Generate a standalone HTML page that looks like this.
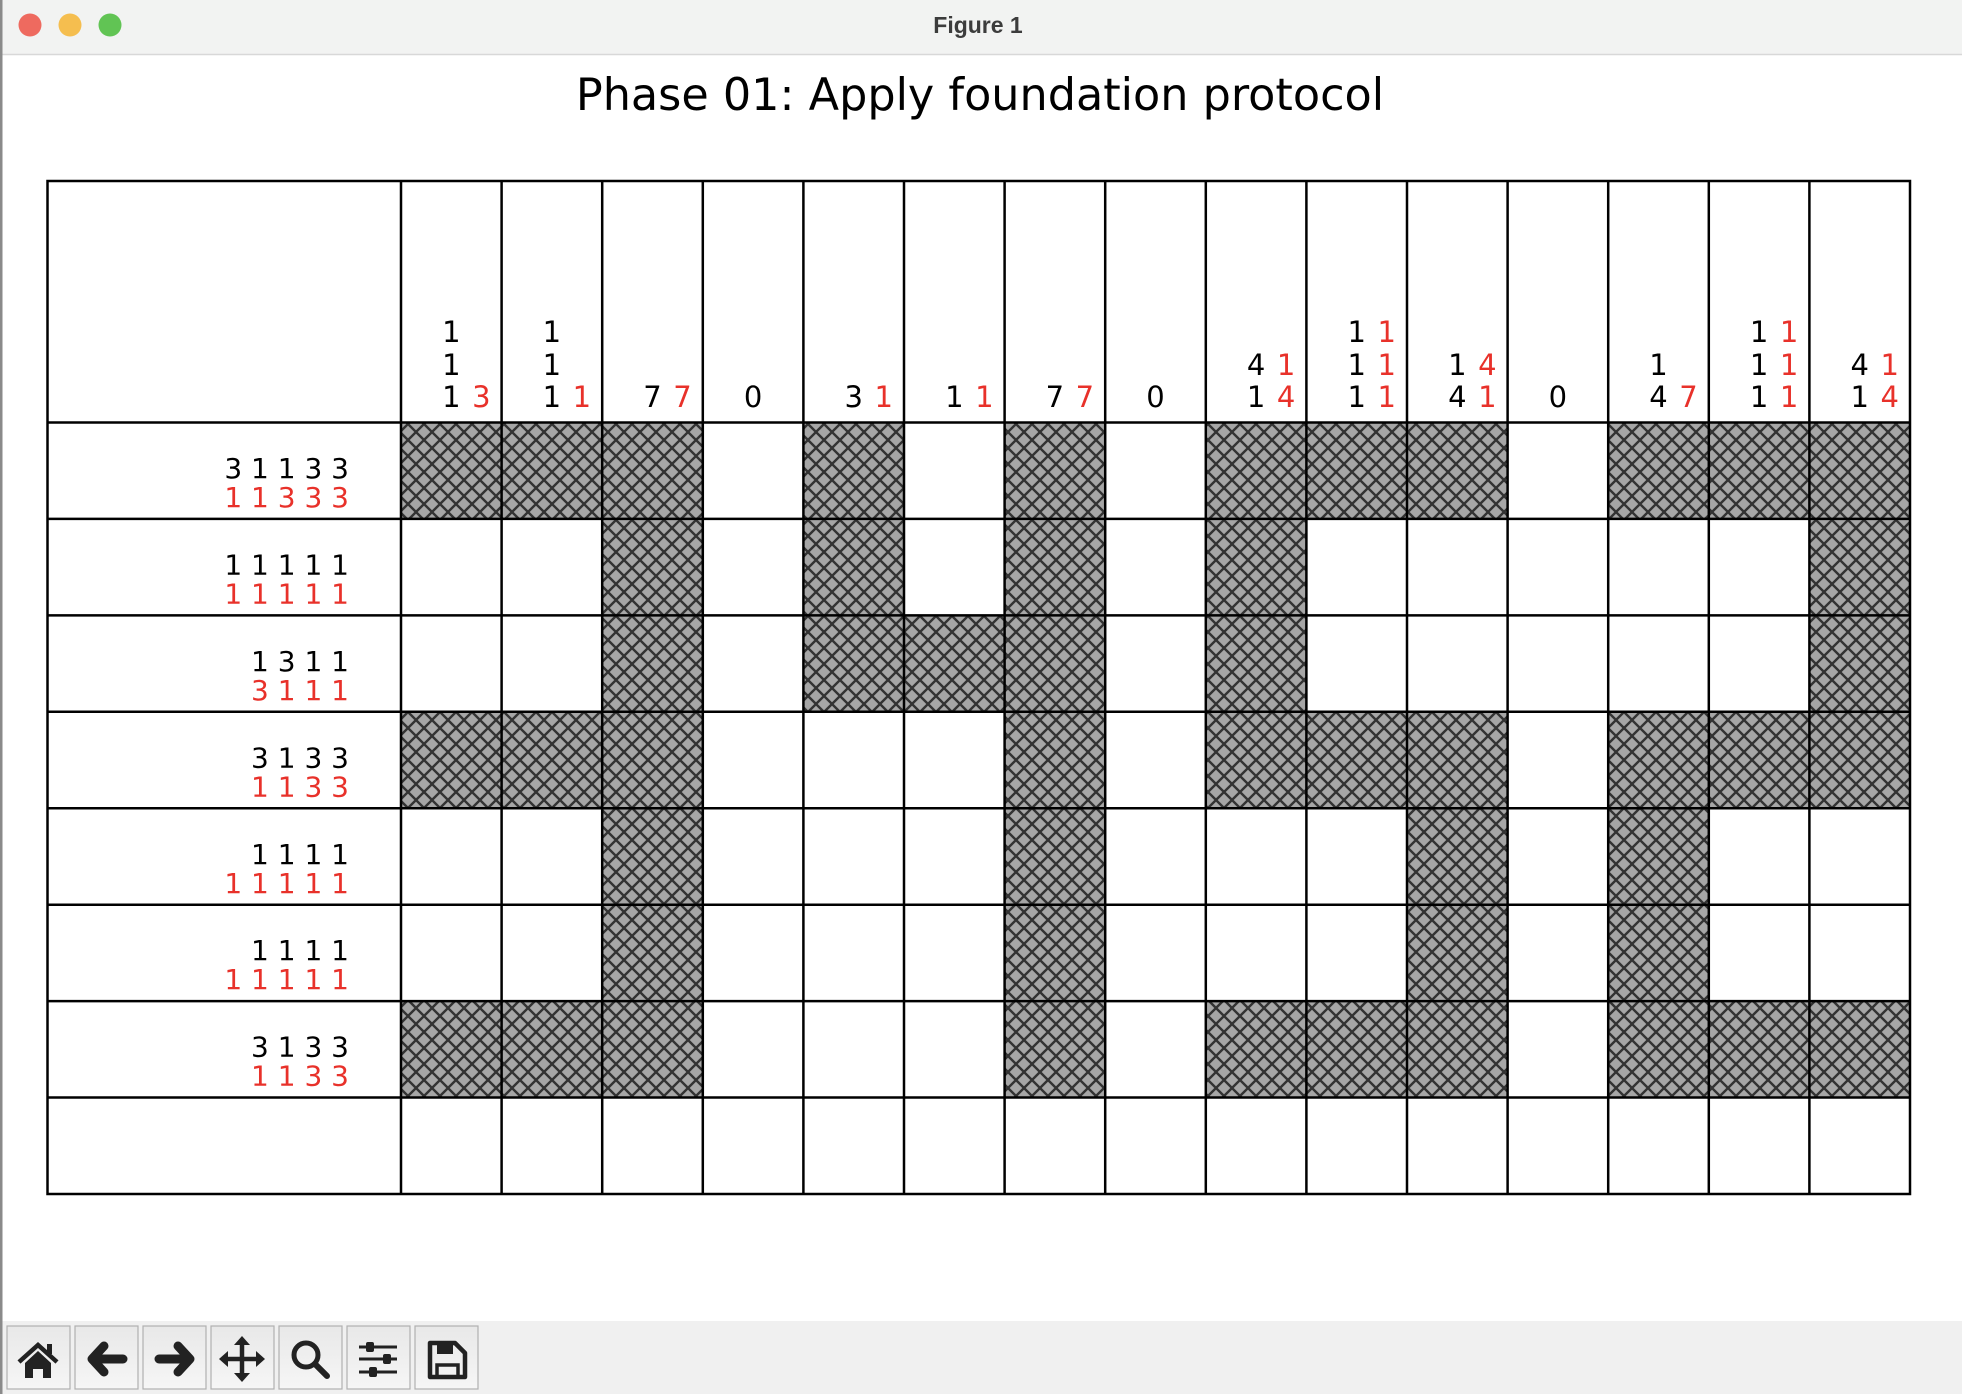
<!DOCTYPE html>
<html><head><meta charset="utf-8"><style>
html,body{margin:0;padding:0;background:#fff;}
body{width:1962px;height:1394px;overflow:hidden;font-family:"DejaVu Sans","Liberation Sans",sans-serif;}
</style></head><body>
<svg width="1962" height="1394" viewBox="0 0 1962 1394" xmlns="http://www.w3.org/2000/svg" font-family="DejaVu Sans, Liberation Sans, sans-serif">
<defs>
<pattern id="h" patternUnits="userSpaceOnUse" width="16" height="16">
<rect width="16" height="16" fill="#a6a6a6"/>
<path d="M-1,-1 L17,17 M-1,17 L17,-1" stroke="#333" stroke-width="2.4"/>
</pattern>
</defs>
<rect width="1962" height="1394" fill="#fff"/>
<rect x="0" y="0" width="1962" height="54" fill="#f2f3f2"/>
<line x1="0" y1="54.5" x2="1962" y2="54.5" stroke="#d8d8d8" stroke-width="1.5"/>
<rect x="0" y="0" width="2.5" height="1394" fill="#8a8a8a"/>
<circle cx="30" cy="25" r="11.5" fill="#ee6a5f"/>
<circle cx="70" cy="25" r="11.5" fill="#f5be4f"/>
<circle cx="110" cy="25" r="11.5" fill="#61c454"/>
<text x="978" y="33" text-anchor="middle" font-size="23" font-weight="bold" fill="#3c3c3c" font-family="Liberation Sans, sans-serif">Figure 1</text>
<text x="980" y="110" text-anchor="middle" font-size="44.5" fill="#000">Phase 01: Apply foundation protocol</text>
<g fill="url(#h)">
<rect x="401" y="422.5" width="100.6" height="96.4"/><rect x="501.6" y="422.5" width="100.6" height="96.4"/><rect x="602.2" y="422.5" width="100.6" height="96.4"/><rect x="803.4" y="422.5" width="100.6" height="96.4"/><rect x="1004.6" y="422.5" width="100.6" height="96.4"/><rect x="1205.8" y="422.5" width="100.6" height="96.4"/><rect x="1306.4" y="422.5" width="100.6" height="96.4"/><rect x="1407" y="422.5" width="100.6" height="96.4"/><rect x="1608.2" y="422.5" width="100.6" height="96.4"/><rect x="1708.8" y="422.5" width="100.6" height="96.4"/><rect x="1809.4" y="422.5" width="100.6" height="96.4"/>
<rect x="602.2" y="518.9" width="100.6" height="96.4"/><rect x="803.4" y="518.9" width="100.6" height="96.4"/><rect x="1004.6" y="518.9" width="100.6" height="96.4"/><rect x="1205.8" y="518.9" width="100.6" height="96.4"/><rect x="1809.4" y="518.9" width="100.6" height="96.4"/>
<rect x="602.2" y="615.4" width="100.6" height="96.4"/><rect x="803.4" y="615.4" width="100.6" height="96.4"/><rect x="904" y="615.4" width="100.6" height="96.4"/><rect x="1004.6" y="615.4" width="100.6" height="96.4"/><rect x="1205.8" y="615.4" width="100.6" height="96.4"/><rect x="1809.4" y="615.4" width="100.6" height="96.4"/>
<rect x="401" y="711.8" width="100.6" height="96.4"/><rect x="501.6" y="711.8" width="100.6" height="96.4"/><rect x="602.2" y="711.8" width="100.6" height="96.4"/><rect x="1004.6" y="711.8" width="100.6" height="96.4"/><rect x="1205.8" y="711.8" width="100.6" height="96.4"/><rect x="1306.4" y="711.8" width="100.6" height="96.4"/><rect x="1407" y="711.8" width="100.6" height="96.4"/><rect x="1608.2" y="711.8" width="100.6" height="96.4"/><rect x="1708.8" y="711.8" width="100.6" height="96.4"/><rect x="1809.4" y="711.8" width="100.6" height="96.4"/>
<rect x="602.2" y="808.3" width="100.6" height="96.4"/><rect x="1004.6" y="808.3" width="100.6" height="96.4"/><rect x="1407" y="808.3" width="100.6" height="96.4"/><rect x="1608.2" y="808.3" width="100.6" height="96.4"/>
<rect x="602.2" y="904.7" width="100.6" height="96.4"/><rect x="1004.6" y="904.7" width="100.6" height="96.4"/><rect x="1407" y="904.7" width="100.6" height="96.4"/><rect x="1608.2" y="904.7" width="100.6" height="96.4"/>
<rect x="401" y="1001.1" width="100.6" height="96.4"/><rect x="501.6" y="1001.1" width="100.6" height="96.4"/><rect x="602.2" y="1001.1" width="100.6" height="96.4"/><rect x="1004.6" y="1001.1" width="100.6" height="96.4"/><rect x="1205.8" y="1001.1" width="100.6" height="96.4"/><rect x="1306.4" y="1001.1" width="100.6" height="96.4"/><rect x="1407" y="1001.1" width="100.6" height="96.4"/><rect x="1608.2" y="1001.1" width="100.6" height="96.4"/><rect x="1708.8" y="1001.1" width="100.6" height="96.4"/><rect x="1809.4" y="1001.1" width="100.6" height="96.4"/>
</g>
<g stroke="#000" stroke-width="2.5">
<rect x="47.5" y="181" width="1862.5" height="1013" fill="none"/>
<line x1="401" y1="181" x2="401" y2="1194"/><line x1="501.6" y1="181" x2="501.6" y2="1194"/><line x1="602.2" y1="181" x2="602.2" y2="1194"/><line x1="702.8" y1="181" x2="702.8" y2="1194"/><line x1="803.4" y1="181" x2="803.4" y2="1194"/><line x1="904" y1="181" x2="904" y2="1194"/><line x1="1004.6" y1="181" x2="1004.6" y2="1194"/><line x1="1105.2" y1="181" x2="1105.2" y2="1194"/><line x1="1205.8" y1="181" x2="1205.8" y2="1194"/><line x1="1306.4" y1="181" x2="1306.4" y2="1194"/><line x1="1407" y1="181" x2="1407" y2="1194"/><line x1="1507.6" y1="181" x2="1507.6" y2="1194"/><line x1="1608.2" y1="181" x2="1608.2" y2="1194"/><line x1="1708.8" y1="181" x2="1708.8" y2="1194"/><line x1="1809.4" y1="181" x2="1809.4" y2="1194"/>
<line x1="47.5" y1="422.5" x2="1910" y2="422.5"/><line x1="47.5" y1="518.9" x2="1910" y2="518.9"/><line x1="47.5" y1="615.4" x2="1910" y2="615.4"/><line x1="47.5" y1="711.8" x2="1910" y2="711.8"/><line x1="47.5" y1="808.3" x2="1910" y2="808.3"/><line x1="47.5" y1="904.7" x2="1910" y2="904.7"/><line x1="47.5" y1="1001.1" x2="1910" y2="1001.1"/><line x1="47.5" y1="1097.5" x2="1910" y2="1097.5"/>
</g>
<g font-size="29" text-anchor="middle" fill="#000">
<text x="451.3" y="342">1</text><text x="451.3" y="375">1</text><text x="451.3" y="407">1</text>
<text x="551.9" y="342">1</text><text x="551.9" y="375">1</text><text x="551.9" y="407">1</text>
<text x="652.5" y="407">7</text>
<text x="753.1" y="407">0</text>
<text x="853.7" y="407">3</text>
<text x="954.3" y="407">1</text>
<text x="1054.9" y="407">7</text>
<text x="1155.5" y="407">0</text>
<text x="1256.1" y="375">4</text><text x="1256.1" y="407">1</text>
<text x="1356.7" y="342">1</text><text x="1356.7" y="375">1</text><text x="1356.7" y="407">1</text>
<text x="1457.3" y="375">1</text><text x="1457.3" y="407">4</text>
<text x="1557.9" y="407">0</text>
<text x="1658.5" y="375">1</text><text x="1658.5" y="407">4</text>
<text x="1759.1" y="342">1</text><text x="1759.1" y="375">1</text><text x="1759.1" y="407">1</text>
<text x="1859.7" y="375">4</text><text x="1859.7" y="407">1</text>
</g>
<g font-size="29" text-anchor="middle" fill="#e8312a">
<text x="481.3" y="407">3</text>
<text x="581.9" y="407">1</text>
<text x="682.5" y="407">7</text>
<text x="883.7" y="407">1</text>
<text x="984.3" y="407">1</text>
<text x="1084.9" y="407">7</text>
<text x="1286.1" y="375">1</text><text x="1286.1" y="407">4</text>
<text x="1386.7" y="342">1</text><text x="1386.7" y="375">1</text><text x="1386.7" y="407">1</text>
<text x="1487.3" y="375">4</text><text x="1487.3" y="407">1</text>
<text x="1688.5" y="407">7</text>
<text x="1789.1" y="342">1</text><text x="1789.1" y="375">1</text><text x="1789.1" y="407">1</text>
<text x="1889.7" y="375">1</text><text x="1889.7" y="407">4</text>
</g>
<g font-size="28" text-anchor="end" xml:space="preserve">
<text x="349" y="478" fill="#000">3 1 1 3 3</text><text x="349" y="507" fill="#e8312a">1 1 3 3 3</text>
<text x="349" y="574.4" fill="#000">1 1 1 1 1</text><text x="349" y="603.4" fill="#e8312a">1 1 1 1 1</text>
<text x="349" y="670.9" fill="#000">1 3 1 1</text><text x="349" y="699.9" fill="#e8312a">3 1 1 1</text>
<text x="349" y="767.3" fill="#000">3 1 3 3</text><text x="349" y="796.3" fill="#e8312a">1 1 3 3</text>
<text x="349" y="863.8" fill="#000">1 1 1 1</text><text x="349" y="892.8" fill="#e8312a">1 1 1 1 1</text>
<text x="349" y="960.2" fill="#000">1 1 1 1</text><text x="349" y="989.2" fill="#e8312a">1 1 1 1 1</text>
<text x="349" y="1056.6" fill="#000">3 1 3 3</text><text x="349" y="1085.6" fill="#e8312a">1 1 3 3</text>
</g>
<defs><linearGradient id="bg" x1="0" y1="0" x2="0" y2="1"><stop offset="0" stop-color="#e8e8e8"/><stop offset="1" stop-color="#f6f6f6"/></linearGradient></defs>
<rect x="2.5" y="1321" width="1960" height="73" fill="#f0f0f0"/>
<g fill="url(#bg)" stroke="#b0b0b0" stroke-width="1.2">
<rect x="7" y="1326" width="63" height="63"/><rect x="75" y="1326" width="63" height="63"/><rect x="143" y="1326" width="63" height="63"/><rect x="211" y="1326" width="63" height="63"/><rect x="279" y="1326" width="63" height="63"/><rect x="347" y="1326" width="63" height="63"/><rect x="415" y="1326" width="63" height="63"/>
</g>
<g fill="#222" stroke="#222">
<path d="M19,1362 L38,1345 L57,1362" fill="none" stroke-width="4.5"/>
<path d="M25,1363 L38,1351 L51,1363 L51,1378 L43,1378 L43,1369 L33,1369 L33,1378 L25,1378 Z" stroke="none"/>
<rect x="47" y="1344" width="5" height="10" stroke="none"/>
<path d="M123,1359 L94,1359 M104,1346 L92,1359 L104,1372" fill="none" stroke-width="9" stroke-linecap="round" stroke-linejoin="round"/>
<path d="M159,1359 L188,1359 M178,1346 L190,1359 L178,1372" fill="none" stroke-width="9" stroke-linecap="round" stroke-linejoin="round"/>
<path d="M242,1342 L242,1376 M225,1359 L259,1359" fill="none" stroke-width="4.5"/>
<path d="M242,1336 L234,1345 L250,1345 Z M242,1382 L234,1373 L250,1373 Z M219,1359 L228,1351 L228,1367 Z M265,1359 L256,1351 L256,1367 Z" stroke="none"/>
<circle cx="306" cy="1355" r="12" fill="none" stroke-width="5"/>
<path d="M315,1364 L327,1376" fill="none" stroke-width="6" stroke-linecap="round"/>
<path d="M359,1347 L397,1347 M359,1359 L397,1359 M359,1372 L397,1372" fill="none" stroke-width="3"/>
<rect x="366" y="1342" width="8" height="10" rx="2" stroke="none"/><rect x="383" y="1354" width="8" height="10" rx="2" stroke="none"/><rect x="369" y="1367" width="8" height="10" rx="2" stroke="none"/>
<path d="M430,1343 L455,1343 L465,1353 L465,1377 L430,1377 Z" fill="none" stroke-width="4.5" stroke-linejoin="round"/>
<rect x="437" y="1343" width="16" height="11" stroke="none"/>
<rect x="437" y="1365" width="21" height="12" fill="none" stroke-width="3.5"/>
</g>
</svg>
</body></html>
